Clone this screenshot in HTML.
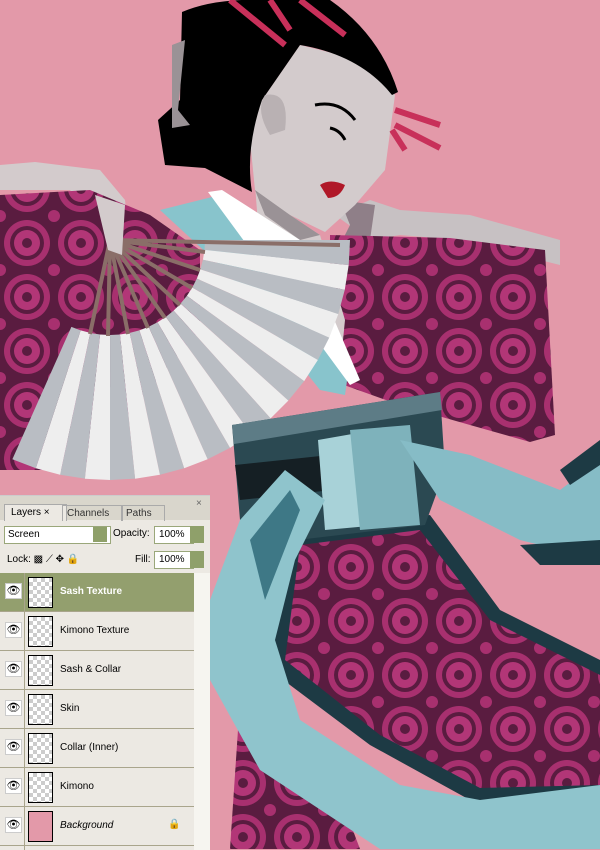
<!DOCTYPE html>
<html><head><meta charset="utf-8"><style>
body{margin:0;width:600px;height:849px;overflow:hidden;background:#e399a9;font-family:"Liberation Sans",Tahoma,sans-serif}
#p{position:absolute;left:0;top:495px;width:210px;height:354px;background:#ece9e3;border-top:1px solid #ccc;font-size:10px;color:#000}
.row{position:absolute;left:0;width:194px;height:38px;border-bottom:1px solid #a9a58c}
.eye{position:absolute;left:5px;top:10px;width:15px;height:14px;background:#fff;border:1px solid #ccc;font-size:11px;text-align:center;line-height:14px}
.th{position:absolute;left:28px;top:4px;width:23px;height:29px;border:1px solid #000;background:repeating-conic-gradient(#ccc 0 25%,#fff 0 50%) 0 0/8px 8px}
.nm{position:absolute;left:60px;top:13px}
</style></head><body>
<svg width="600" height="849" style="position:absolute;left:0;top:0">
<defs>
<pattern id="k" width="54" height="54" patternUnits="userSpaceOnUse">
<rect width="54" height="54" fill="#5a1c40"/>
<circle cx="27" cy="27" r="23" fill="#a8306f"/><circle cx="27" cy="27" r="17" fill="#5a1c40"/><circle cx="27" cy="27" r="13" fill="#b23677"/><circle cx="27" cy="27" r="5" fill="#5a1c40"/>
<circle cx="0" cy="0" r="6" fill="#a8306f"/><circle cx="54" cy="0" r="6" fill="#a8306f"/><circle cx="0" cy="54" r="6" fill="#a8306f"/><circle cx="54" cy="54" r="6" fill="#a8306f"/>
</pattern>
<path id="w" d="M95,0 L240,0 L238.7,25.1 L94.5,9.9 Z"/>
</defs>
<!-- arms -->
<polygon points="0,165 35,162 100,170 125,200 130,245 105,235 70,190 0,190" fill="#d3cbcc"/>
<polygon points="335,215 370,200 400,210 470,215 560,240 560,265 460,240 400,235 370,240" fill="#c7c1c3"/>
<polygon points="340,200 375,205 370,240 340,245 350,225" fill="#8f7f88"/>
<!-- sleeves -->
<polygon points="0,195 90,190 150,215 200,250 200,330 80,470 0,470" fill="url(#k)"/>
<polygon points="330,235 450,238 545,250 555,435 530,442 470,425 400,405 330,380" fill="url(#k)"/>
<!-- neck/face -->
<polygon points="255,185 290,215 320,235 345,320 340,370 300,320 260,250" fill="#d3cbcc"/>
<polygon points="300,45 360,60 395,95 385,170 355,205 325,232 290,215 255,190 248,120" fill="#d3cbcc"/>
<polygon points="255,190 290,215 320,235 300,240 265,215" fill="#9a9296"/>
<!-- hair -->
<path d="M182,12 Q215,-2 265,0 L330,0 Q380,35 398,92 L392,95 Q360,55 300,45 L262,100 Q245,150 252,192 L205,168 L165,165 L158,120 L180,100 Z" fill="#000"/>
<path d="M172,45 L185,40 L178,110 L190,125 L172,128 Z" fill="#9a9296"/>
<path d="M265,95 Q290,90 285,130 L270,135 Q255,110 265,95Z" fill="#b9b1b3"/>
<g stroke="#c8305a" stroke-width="6"><line x1="230" y1="0" x2="285" y2="45"/><line x1="270" y1="0" x2="290" y2="30"/><line x1="300" y1="0" x2="345" y2="35"/><line x1="395" y1="110" x2="440" y2="125"/><line x1="395" y1="125" x2="440" y2="148"/><line x1="392" y1="130" x2="405" y2="150"/></g>
<path d="M315,105 Q340,100 355,120 M330,128 Q340,130 345,140" stroke="#000" stroke-width="3" fill="none"/>
<path d="M320,185 Q330,178 345,185 Q340,198 328,198 Z" fill="#b01828"/>
<!-- collar -->
<polygon points="160,210 220,195 262,220 350,360 345,395 320,390 225,270" fill="#88c4cc"/>
<polygon points="208,192 222,190 300,240 360,380 350,385" fill="#fff"/>
<!-- lower kimono -->
<polygon points="285,530 430,515 500,610 600,660 600,800 470,800 370,745 270,670" fill="#1d3a44"/>
<polygon points="300,545 420,530 490,620 600,675 600,785 480,788 380,735 285,660" fill="url(#k)"/>
<polygon points="240,700 330,770 360,849 230,849" fill="url(#k)"/>
<!-- fan -->
<g transform="translate(110,240)">
<use href="#w" transform="rotate(0)" fill="#b9bdc3"/><use href="#w" transform="rotate(6)" fill="#eeeeee"/>
<use href="#w" transform="rotate(12)" fill="#b9bdc3"/><use href="#w" transform="rotate(18)" fill="#eeeeee"/>
<use href="#w" transform="rotate(24)" fill="#b9bdc3"/><use href="#w" transform="rotate(30)" fill="#eeeeee"/>
<use href="#w" transform="rotate(36)" fill="#b9bdc3"/><use href="#w" transform="rotate(42)" fill="#eeeeee"/>
<use href="#w" transform="rotate(48)" fill="#b9bdc3"/><use href="#w" transform="rotate(54)" fill="#eeeeee"/>
<use href="#w" transform="rotate(60)" fill="#b9bdc3"/><use href="#w" transform="rotate(66)" fill="#eeeeee"/>
<use href="#w" transform="rotate(72)" fill="#b9bdc3"/><use href="#w" transform="rotate(78)" fill="#eeeeee"/>
<use href="#w" transform="rotate(84)" fill="#b9bdc3"/><use href="#w" transform="rotate(90)" fill="#eeeeee"/>
<use href="#w" transform="rotate(96)" fill="#b9bdc3"/><use href="#w" transform="rotate(102)" fill="#eeeeee"/>
<use href="#w" transform="rotate(108)" fill="#b9bdc3"/>
<g stroke="#8a6e68" stroke-width="4">
<line x1="0" y1="0" x2="230" y2="5"/><line x1="0" y1="0" x2="95" y2="12"/><line x1="0" y1="0" x2="90" y2="30"/><line x1="0" y1="0" x2="82" y2="48"/><line x1="0" y1="0" x2="70" y2="65"/><line x1="0" y1="0" x2="55" y2="78"/><line x1="0" y1="0" x2="38" y2="88"/><line x1="0" y1="0" x2="18" y2="94"/><line x1="0" y1="0" x2="-2" y2="96"/><line x1="0" y1="0" x2="-20" y2="94"/>
</g></g>
<polygon points="95,195 125,205 122,255 108,250" fill="#d3cbcc"/>
<!-- obi -->
<polygon points="232,425 440,392 445,470 425,525 255,545 240,520" fill="#2b4952"/>
<polygon points="232,425 440,392 442,410 234,444" fill="#5d7c86"/>
<polygon points="235,465 330,455 332,490 240,500" fill="#151f24"/>
<polygon points="318,440 375,430 380,525 325,530" fill="#a8d2d8"/>
<polygon points="350,430 410,425 420,525 360,530" fill="#7eb2bb"/>
<!-- sash -->
<polygon points="210,600 240,520 285,470 325,500 295,560 275,640 300,720 400,785 480,800 600,785 600,849 380,849 260,770 210,680" fill="#8fc4cc"/>
<polygon points="250,540 290,490 300,510 265,600" fill="#3e7886"/>
<polygon points="400,440 470,455 560,490 600,460 600,560 520,540 440,500" fill="#86bcc6"/>
<polygon points="520,545 600,540 600,565 540,565" fill="#1d3a44"/>
<polygon points="560,470 600,440 600,465 570,485" fill="#1d3a44"/>
</svg>
<div id="p">
<div style="position:absolute;left:0;top:0;width:210px;height:24px;background:#d9d6cc"></div>
<div style="position:absolute;left:4px;top:8px;width:55px;height:16px;background:#ece9e3;border:1px solid #aaa;border-bottom:none;padding-left:6px;line-height:16px">Layers ×</div>
<div style="position:absolute;left:62px;top:9px;width:55px;height:15px;border:1px solid #aaa;border-bottom:none;padding-left:4px;line-height:15px;color:#333">Channels</div>
<div style="position:absolute;left:121px;top:9px;width:38px;height:15px;border:1px solid #aaa;border-bottom:none;padding-left:4px;line-height:15px;color:#333">Paths</div>
<div style="position:absolute;left:196px;top:2px;color:#666">×</div>
<div style="position:absolute;left:4px;top:30px;width:102px;height:16px;background:#fff;border:1px solid #9aa77a;line-height:16px;padding-left:3px">Screen</div>
<div style="position:absolute;left:93px;top:31px;width:14px;height:15px;background:#8fa06a"></div>
<div style="position:absolute;left:113px;top:32px">Opacity:</div>
<div style="position:absolute;left:154px;top:30px;width:34px;height:16px;background:#fff;border:1px solid #9aa77a;line-height:16px;padding-left:4px">100%</div>
<div style="position:absolute;left:190px;top:30px;width:14px;height:17px;background:#8fa06a"></div>
<div style="position:absolute;left:7px;top:58px">Lock: ▩ ⟋ ✥ 🔒</div>
<div style="position:absolute;left:135px;top:58px">Fill:</div>
<div style="position:absolute;left:154px;top:55px;width:34px;height:16px;background:#fff;border:1px solid #9aa77a;line-height:16px;padding-left:4px">100%</div>
<div style="position:absolute;left:190px;top:55px;width:14px;height:17px;background:#8fa06a"></div>
<div style="position:absolute;left:194px;top:77px;width:16px;height:277px;background:#f6f5f0"></div>
<div class="row" style="top:77px;background:#939f6e"><div class="eye">👁</div><div class="th"></div><div class="nm" style="color:#fff;font-weight:bold">Sash Texture</div></div>
<div class="row" style="top:116px"><div class="eye">👁</div><div class="th"></div><div class="nm">Kimono Texture</div></div>
<div class="row" style="top:155px"><div class="eye">👁</div><div class="th"></div><div class="nm">Sash &amp; Collar</div></div>
<div class="row" style="top:194px"><div class="eye">👁</div><div class="th"></div><div class="nm">Skin</div></div>
<div class="row" style="top:233px"><div class="eye">👁</div><div class="th"></div><div class="nm">Collar (Inner)</div></div>
<div class="row" style="top:272px"><div class="eye">👁</div><div class="th"></div><div class="nm">Kimono</div></div>
<div class="row" style="top:311px"><div class="eye">👁</div><div class="th" style="background:#e399a9"></div><div class="nm" style="font-style:italic">Background</div><div style="position:absolute;left:168px;top:12px">🔒</div></div>
<div style="position:absolute;left:24px;top:77px;width:1px;height:277px;background:#a9a58c"></div>
</div>
</body></html>
